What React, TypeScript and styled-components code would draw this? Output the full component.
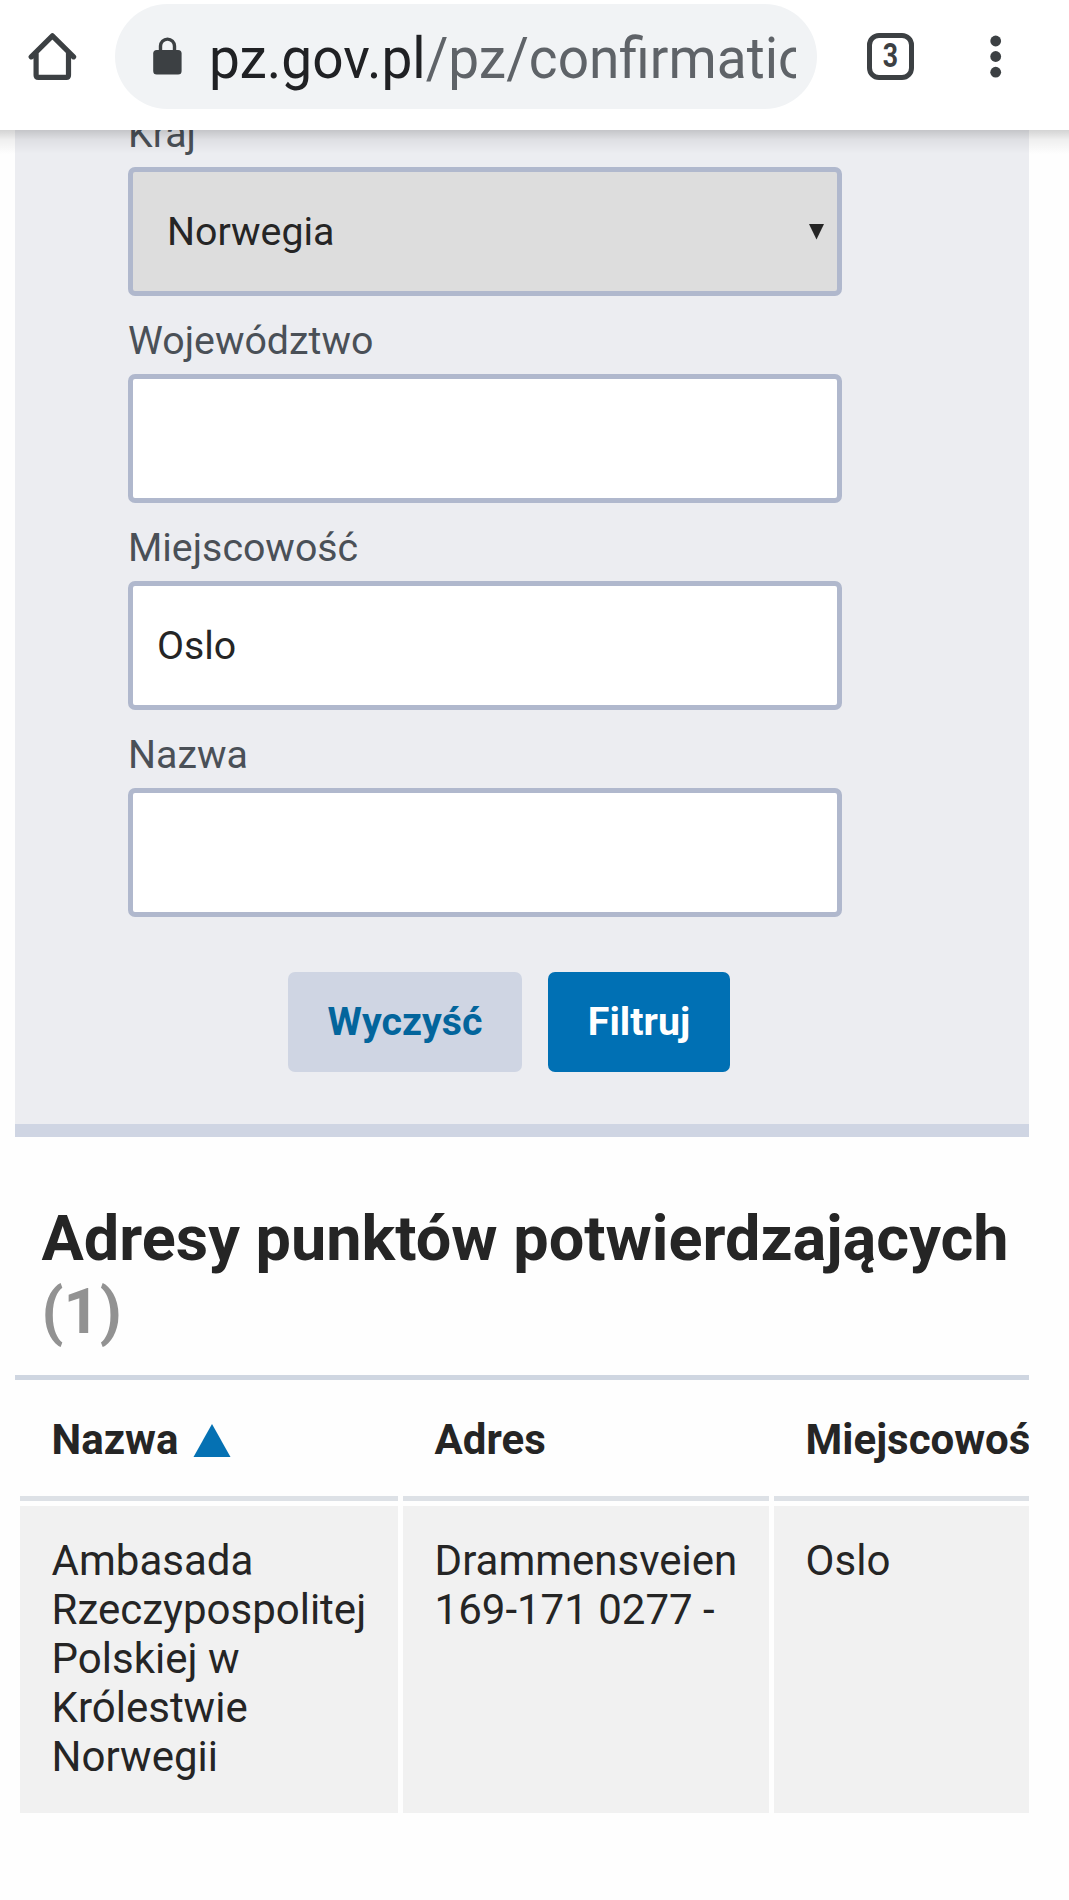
import React from "react";
import styled, { createGlobalStyle } from "styled-components";

const GlobalStyle = createGlobalStyle`
  * { box-sizing: border-box; }
  body {
    margin: 0;
    background: #fefefe;
    color: #252525;
    font-family: Roboto, "Liberation Sans", sans-serif;
  }
`;

const Page = styled.div`
  width: 1069px;
  height: 1900px;
  overflow: hidden;
  background: #fefefe;
`;

const BrowserBar = styled.header`
  position: relative;
  z-index: 2;
  display: flex;
  align-items: flex-start;
  height: 130px;
  padding: 4px 0 0 28px;
  background: #ffffff;

  &::after {
    content: "";
    position: absolute;
    top: 100%;
    left: 0;
    right: 0;
    height: 24px;
    background: linear-gradient(rgba(0, 0, 0, 0.17), rgba(0, 0, 0, 0.06) 40%, rgba(0, 0, 0, 0));
    pointer-events: none;
  }
`;

const BarIcon = styled.svg<{ $gap?: number }>`
  flex: none;
  display: block;
  margin-top: 28px;
  margin-left: ${(p) => p.$gap ?? 0}px;
`;

const AddressBar = styled.div`
  display: flex;
  align-items: center;
  width: 702px;
  height: 105px;
  margin-left: 38px;
  padding: 0 21px 0 38px;
  border-radius: 53px;
  background: #f1f3f5;
`;

const LockIcon = styled.svg`
  flex: none;
  display: block;
  margin: 0 27px 2px 0;
`;

const Url = styled.div`
  flex: 1;
  overflow: hidden;
  padding-top: 4px;
  white-space: nowrap;
  font-size: 57px;
  line-height: 80px;
  color: #202124;
`;

const UrlText = styled.span`
  display: inline-block;
  transform: scaleX(0.965);
  transform-origin: left center;
`;

const UrlPath = styled.span`
  color: #5f6368;
`;

const TabCount = styled.div`
  display: flex;
  align-items: center;
  justify-content: center;
  width: 47px;
  height: 47px;
  margin: 29px 0 0 50px;
  border: 5px solid #3c4043;
  border-radius: 12px;
  font-size: 32.5px;
  font-weight: 700;
  line-height: 37px;
  color: #3c4043;
`;

const Condensed = styled.span`
  display: block;
  transform: scaleX(0.82);
`;

const Content = styled.main`
  width: 1014px;
  margin-left: 15px;
`;

const FilterPanel = styled.section`
  height: 1007px;
  padding: 0 187px 0 113px;
  border-bottom: 13px solid #cfd5e3;
  background: #ecedf1;
`;

const Fields = styled.div`
  display: flex;
  flex-direction: column;
  gap: 20px;
  margin-top: -21px;
`;

const PanelBody = styled.div`
  display: flow-root;
`;

const Field = styled.div`
  display: flex;
  flex-direction: column;
  gap: 8px;
`;

const Label = styled.label`
  font-size: 39.3px;
  line-height: 50px;
  color: #4a5057;
`;

const Control = styled.div<{ $select?: boolean }>`
  display: flex;
  align-items: center;
  justify-content: space-between;
  height: 129px;
  padding: ${(p) => (p.$select ? "0 13px 0 34px" : "0 24px 0 24px")};
  border: 5px solid #b0b8cd;
  border-radius: 7px;
  background: ${(p) => (p.$select ? "#dddddd" : "#ffffff")};
  font-size: 39.3px;
  line-height: 50px;
`;

const Actions = styled.div`
  display: flex;
  gap: 26px;
  margin: 55px 0 0 160px;
`;

const Button = styled.button<{ $primary?: boolean }>`
  width: ${(p) => (p.$primary ? 182 : 234)}px;
  height: 100px;
  padding: 0;
  border: 0;
  border-radius: 7px;
  background: ${(p) => (p.$primary ? "#0070b4" : "#cfd5e3")};
  color: ${(p) => (p.$primary ? "#ffffff" : "#03659c")};
  font-family: inherit;
  font-size: 39.3px;
  font-weight: 700;
  line-height: 50px;
`;

const Heading = styled.h1`
  margin: 0;
  padding: 65px 0 27px 26.5px;
  border-bottom: 5px solid #cfd6e1;
  font-size: 63px;
  font-weight: 700;
  line-height: 73px;
  white-space: nowrap;
`;

const Total = styled.span`
  display: block;
  color: #929292;
`;

const Results = styled.div`
  display: grid;
  grid-template-columns: 378px 366px 255px;
  gap: 5px;
  padding-left: 5px;
  overflow: hidden;
`;

const HeadCell = styled.div`
  display: flex;
  align-items: flex-start;
  height: 121px;
  padding: 35px 0 0 31.6px;
  border-bottom: 5px solid #dde1e6;
  overflow: hidden;
  font-size: 42px;
  font-weight: 700;
  line-height: 49px;
  white-space: nowrap;
`;

const SortArrow = styled.svg`
  display: block;
  margin: 9px 0 0 14.6px;
`;

const Cell = styled.div`
  height: 307px;
  padding: 30px 0 0 31.6px;
  background: #f1f1f1;
  font-size: 42px;
  line-height: 49px;
  white-space: pre-line;
`;

const fields = [
  { label: "Kraj", value: "Norwegia", select: true },
  { label: "Województwo", value: "" },
  { label: "Miejscowość", value: "Oslo" },
  { label: "Nazwa", value: "" },
];

export default function App() {
  return (
    <>
      <GlobalStyle />
      <Page>
        <BrowserBar>
          <BarIcon width="49" height="50" viewBox="0 0 49 50">
            <path
              d="M3.2 24.800 24.400 3.800 45.600 24.800M8.100 20.500V43.200Q8.100 45.400 10.300 45.400H38.300Q40.500 45.400 40.500 43.200V20.500"
              fill="none"
              stroke="#3c4043"
              strokeWidth="5.200"
              strokeLinecap="round"
              strokeLinejoin="round"
            />
          </BarIcon>
          <AddressBar>
            <LockIcon width="29" height="38" viewBox="0 0 29 38">
              <path d="M7.500 15V9.100a7 7 0 0 1 14 0V15" fill="none" stroke="#3c4043" strokeWidth="3.400" />
              <rect x="0.200" y="13" width="28.400" height="24.500" rx="3.500" fill="#3c4043" />
            </LockIcon>
            <Url>
              <UrlText>
                pz.gov.pl<UrlPath>/pz/confirmation</UrlPath>
              </UrlText>
            </Url>
          </AddressBar>
          <TabCount>
            <Condensed>3</Condensed>
          </TabCount>
          <BarIcon $gap={76} width="12" height="50" viewBox="0 0 12 50">
            <circle cx="5.700" cy="9" r="5.400" fill="#3c4043" />
            <circle cx="5.700" cy="24.500" r="5.400" fill="#3c4043" />
            <circle cx="5.700" cy="40.200" r="5.400" fill="#3c4043" />
          </BarIcon>
        </BrowserBar>
        <Content>
          <FilterPanel>
            <PanelBody>
              <Fields>
                {fields.map((f) => (
                  <Field key={f.label}>
                    <Label>{f.label}</Label>
                    <Control $select={f.select}>
                      {f.value}
                      {f.select && (
                        <svg width="15" height="16" viewBox="0 0 15 16">
                          <path d="M0 0H15L7.500 15.500Z" fill="#252525" />
                        </svg>
                      )}
                    </Control>
                  </Field>
                ))}
              </Fields>
              <Actions>
                <Button>Wyczyść</Button>
                <Button $primary>Filtruj</Button>
              </Actions>
            </PanelBody>
          </FilterPanel>
          <Heading>
            Adresy punktów potwierdzających
            <Total>(1)</Total>
          </Heading>
          <Results>
            <HeadCell>
              Nazwa
              <SortArrow width="38" height="34" viewBox="0 0 38 34">
                <path d="M19 0 37.500 33H0.500Z" fill="#0571b3" />
              </SortArrow>
            </HeadCell>
            <HeadCell>Adres</HeadCell>
            <HeadCell>Miejscowość</HeadCell>
            <Cell>{"Ambasada\nRzeczypospolitej\nPolskiej w\nKrólestwie\nNorwegii"}</Cell>
            <Cell>{"Drammensveien\n169-171 0277 -"}</Cell>
            <Cell>Oslo</Cell>
          </Results>
        </Content>
      </Page>
    </>
  );
}
